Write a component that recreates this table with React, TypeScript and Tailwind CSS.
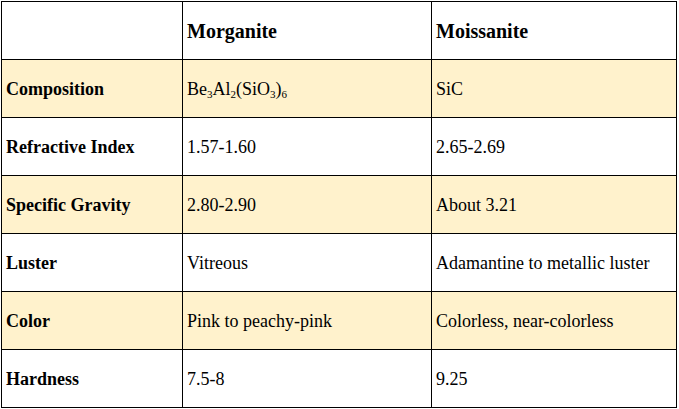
const rows: { label: string; a: React.ReactNode; b: string }[] = [
  {
    label: "Composition",
    a: (
      <>
        Be<sub className="align-[-1px] text-[11px]">3</sub>Al<sub className="align-[-1px] text-[11px]">2</sub>(SiO
        <sub className="align-[-1px] text-[11px]">3</sub>)<sub className="align-[-1px] text-[11px]">6</sub>
      </>
    ),
    b: "SiC",
  },
  { label: "Refractive Index", a: "1.57-1.60", b: "2.65-2.69" },
  { label: "Specific Gravity", a: "2.80-2.90", b: "About 3.21" },
  { label: "Luster", a: "Vitreous", b: "Adamantine to metallic luster" },
  { label: "Color", a: "Pink to peachy-pink", b: "Colorless, near-colorless" },
  { label: "Hardness", a: "7.5-8", b: "9.25" },
];

const cell = "flex h-[58px] items-center border-r border-b border-black px-[4px]";

export default function App() {
  return (
    <div className="h-[409px] w-[679px] bg-white pl-px pt-px font-['Liberation_Serif','Times_New_Roman',serif] text-black">
      <div className="grid w-[676px] grid-cols-[181px_249px_245px] border-l border-t border-black text-[18px] leading-none">
        <div className={cell} />
        <div className={`${cell} text-[20px] font-bold`}>Morganite</div>
        <div className={`${cell} text-[20px] font-bold`}>Moissanite</div>
        {rows.map((r, i) => {
          const bg = i % 2 === 0 ? "bg-[#fff2cc]" : "bg-white";
          return (
            <div key={r.label} className="contents">
              <div className={`${cell} ${bg} font-bold`}>{r.label}</div>
              <div className={`${cell} ${bg}`}>
                <span>{r.a}</span>
              </div>
              <div className={`${cell} ${bg}`}>{r.b}</div>
            </div>
          );
        })}
      </div>
    </div>
  );
}
